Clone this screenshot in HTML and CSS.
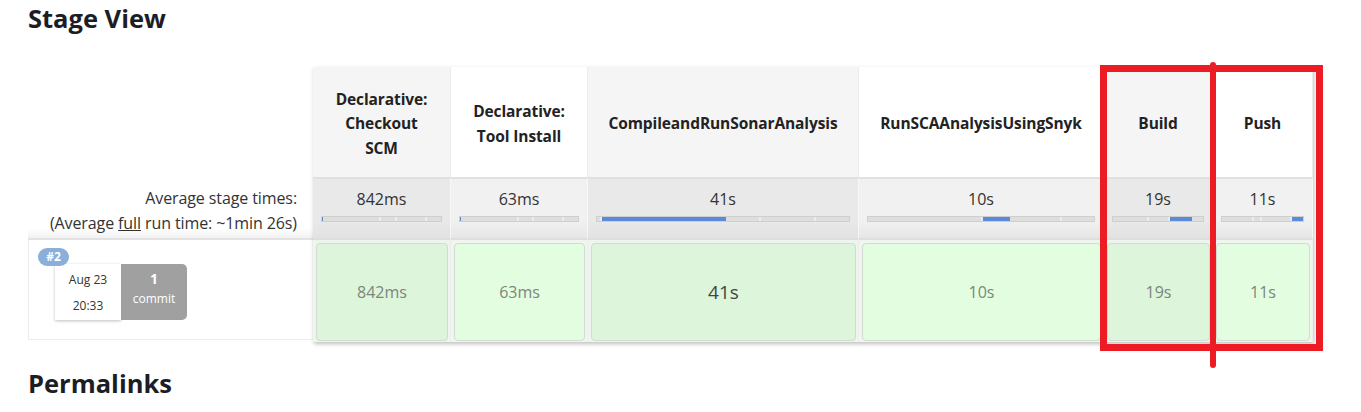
FILE: index.html
```html
<!DOCTYPE html>
<html lang="en">
<head>
<meta charset="utf-8">
<title>Stage View</title>
<link rel="stylesheet" href="styles.css">
</head>
<body>
<div class="page">
  <h2 class="section-title">Stage View</h2>

  <div class="stage-view">
    <div class="left-col">
      <div class="left-head"></div>
      <div class="left-avg">
        <div>Average stage times:</div>
        <div>(Average <u>full</u> run time: ~1min 26s)</div>
      </div>
      <div class="left-run">
        <div class="run-box">
          <span class="badge">#2</span>
          <div class="run-date">
            <div>Aug 23</div>
            <div>20:33</div>
          </div>
          <div class="run-commit">
            <div class="commit-num">1</div>
            <div>commit</div>
          </div>
        </div>
      </div>
    </div>

    <div class="stages">
      <div class="head odd">Declarative:<br>Checkout<br>SCM</div>
      <div class="head even">Declarative:<br>Tool Install</div>
      <div class="head odd">CompileandRunSonarAnalysis</div>
      <div class="head even">RunSCAAnalysisUsingSnyk</div>
      <div class="head odd">Build</div>
      <div class="head even">Push</div>

      <div class="avg odd"><div class="avg-time">842ms</div>
        <div class="bar"><span class="seg fill" style="width:1%"></span><span class="seg" style="width:49%"></span><span class="seg" style="width:13%"></span><span class="seg" style="width:25%"></span><span class="seg" style="width:12%"></span></div></div>
      <div class="avg even"><div class="avg-time">63ms</div>
        <div class="bar"><span class="seg fill" style="width:1%"></span><span class="seg" style="width:49%"></span><span class="seg" style="width:13%"></span><span class="seg" style="width:25%"></span><span class="seg" style="width:12%"></span></div></div>
      <div class="avg odd"><div class="avg-time">41s</div>
        <div class="bar"><span class="seg" style="width:2%"></span><span class="seg fill" style="width:49%"></span><span class="seg" style="width:14%"></span><span class="seg" style="width:22%"></span><span class="seg" style="width:13%"></span></div></div>
      <div class="avg even"><div class="avg-time">10s</div>
        <div class="bar"><span class="seg" style="width:51%"></span><span class="seg fill" style="width:12%"></span><span class="seg" style="width:23%"></span><span class="seg" style="width:14%"></span></div></div>
      <div class="avg odd"><div class="avg-time">19s</div>
        <div class="bar"><span class="seg" style="width:40%"></span><span class="seg" style="width:23%"></span><span class="seg fill" style="width:25%"></span><span class="seg" style="width:12%"></span></div></div>
      <div class="avg even"><div class="avg-time">11s</div>
        <div class="bar"><span class="seg" style="width:40%"></span><span class="seg" style="width:10%"></span><span class="seg" style="width:37%"></span><span class="seg fill" style="width:13%"></span></div></div>

      <div class="run odd"><div class="cell">842ms</div></div>
      <div class="run even"><div class="cell">63ms</div></div>
      <div class="run odd"><div class="cell big">41s</div></div>
      <div class="run even"><div class="cell">10s</div></div>
      <div class="run odd"><div class="cell">19s</div></div>
      <div class="run even"><div class="cell">11s</div></div>
    </div>
  </div>

  <h2 class="section-title permalinks">Permalinks</h2>

  <div class="mark-box"></div>
  <div class="mark-line"></div>
</div>
</body>
</html>
```

FILE: styles.css
```css
* { box-sizing: border-box; }

html, body {
  margin: 0;
  padding: 0;
  background: #fff;
}

body {
  font-family: "Open Sans", "Noto Sans", "Liberation Sans", sans-serif;
  color: #333;
}

.page {
  position: relative;
  padding: 0 28px;
  width: 1361px;
  height: 412px;
  overflow: hidden;
}

.section-title {
  margin: 0;
  font-size: 25.5px;
  line-height: 36px;
  font-weight: 700;
  color: #1d1d26;
  letter-spacing: 0;
}

.permalinks {
  margin-top: 23px;
}

.stage-view {
  margin-top: 31px;
  display: flex;
  align-items: flex-start;
}

/* left column */
.left-col {
  width: 285px;
  display: flex;
  flex-direction: column;
}

.left-head {
  height: 110px;
}

.left-avg {
  height: 61px;
  padding: 9px 16px 0 0;
  text-align: right;
  font-size: 16px;
  line-height: 25px;
  color: #333;
  letter-spacing: -0.1px;
  background: linear-gradient(#fff 85%, #f2f2f2);
}

.left-run {
  height: 104px;
  border-top: 2px solid #e2e2e2;
}

.run-box {
  position: relative;
  height: 100px;
  border: 1px solid #ececec;
  border-top: none;
  padding: 24px 0 0 26px;
  display: flex;
  align-items: flex-start;
}

.badge {
  position: absolute;
  left: 9px;
  top: 8px;
  width: 31px;
  height: 18px;
  border-radius: 9px;
  background: #8aafdb;
  color: #fff;
  font-size: 12px;
  font-weight: 700;
  line-height: 18px;
  text-align: center;
}

.run-date {
  width: 66px;
  height: 56px;
  background: #fff;
  box-shadow: 0 1px 3px rgba(0,0,0,0.25);
  font-size: 12px;
  line-height: 26px;
  text-align: center;
  color: #333;
  padding-top: 3px;
}

.run-commit {
  width: 66px;
  height: 56px;
  background: #a0a0a0;
  border-radius: 0 5px 5px 0;
  color: #fff;
  font-size: 12px;
  line-height: 20px;
  text-align: center;
  padding-top: 5px;
}

.commit-num {
  font-weight: 700;
  font-size: 14px;
}

/* stage table */
.stages {
  width: 1000px;
  display: grid;
  grid-template-columns: 138px 137px 271px 245px 109px 100px;
  grid-template-rows: 110px 61px 104px;
  box-shadow: 1px 2px 4px rgba(0,0,0,0.25);
  background: #f0f0f0;
}

.head {
  display: flex;
  align-items: center;
  justify-content: center;
  text-align: center;
  font-size: 15.5px;
  font-weight: 700;
  line-height: 24.5px;
  color: #222;
  letter-spacing: -0.1px;
  border-right: 1px solid #ececec;
  padding-top: 3px;
}
.head.odd { background: #f5f5f5; }
.head.even { background: #fff; }

.avg {
  border-top: 2px solid #e0e0e0;
  border-right: 1px solid #f7f7f7;
  padding: 9px 8px 0;
}
.avg.odd { background: linear-gradient(#e9e9e9 70%, #e2e2e2); }
.avg.even { background: linear-gradient(#f1f1f1 70%, #e6e6e6); }

.avg-time {
  text-align: center;
  font-size: 16px;
  line-height: 22px;
  color: #333;
}

.bar {
  margin-top: 6px;
  height: 6px;
  display: flex;
  border: 1px solid #cfcfcf;
  background: #dedede;
}

.seg {
  height: 100%;
  border-right: 2px solid #ececec;
  background: #dedede;
}
.seg:last-child { border-right: none; }
.seg.fill { background: #5b8ad8; border-right: none; }

.run {
  border-top: 2px solid #dedede;
  padding: 3px 2px 2px 3px;
  border-right: 1px solid #eee;
}
.run.odd { background: #eef5ee; }
.run.even { background: #f0f5f0; }

.cell {
  height: 98px;
  border: 1px solid #cfdccf;
  border-radius: 4px;
  display: flex;
  align-items: center;
  justify-content: center;
  font-size: 16px;
  color: #7c867c;
}
.run.odd .cell { background: #ddf5da; }
.run.even .cell { background: #e3fde0; }
.cell.big {
  font-size: 19px;
  color: #444;
}

/* annotation overlays */
.mark-box {
  position: absolute;
  left: 1100px;
  top: 65px;
  width: 223px;
  height: 286px;
  border: 7px solid #ed1c24;
}

.mark-line {
  position: absolute;
  left: 1210px;
  top: 62px;
  width: 6px;
  height: 306px;
  border-radius: 3px;
  background: #ed1c24;
}
```
